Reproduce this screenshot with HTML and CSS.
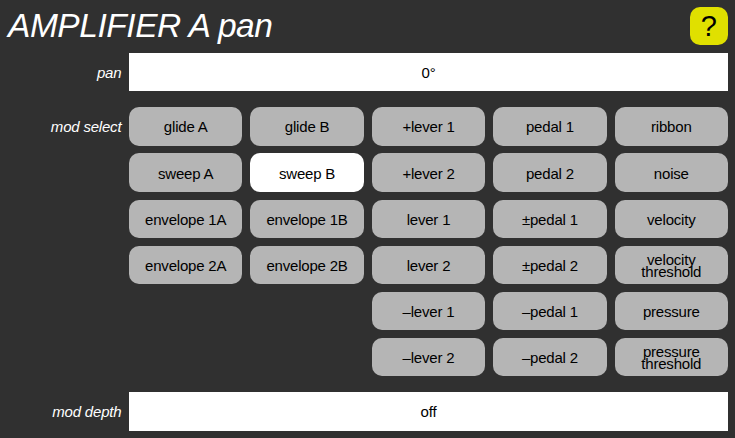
FILE: index.html
```html
<!DOCTYPE html>
<html lang="en">
<head>
<meta charset="utf-8">
<title>AMPLIFIER A pan</title>
<link rel="stylesheet" href="styles.css">
</head>
<body>
<header class="header">
  <h1 class="title">AMPLIFIER A pan</h1>
  <button class="help">?</button>
</header>
<main class="form">
  <div class="label">pan</div>
  <div class="field">0°</div>
  <div class="label">mod select</div>
  <div class="options">
    <button class="option">glide A</button>
    <button class="option">glide B</button>
    <button class="option">+lever 1</button>
    <button class="option">pedal 1</button>
    <button class="option">ribbon</button>
    <button class="option">sweep A</button>
    <button class="option selected">sweep B</button>
    <button class="option">+lever 2</button>
    <button class="option">pedal 2</button>
    <button class="option">noise</button>
    <button class="option">envelope 1A</button>
    <button class="option">envelope 1B</button>
    <button class="option">lever 1</button>
    <button class="option">±pedal 1</button>
    <button class="option">velocity</button>
    <button class="option">envelope 2A</button>
    <button class="option">envelope 2B</button>
    <button class="option">lever 2</button>
    <button class="option">±pedal 2</button>
    <button class="option">velocity<br>threshold</button>
    <button class="option third">–lever 1</button>
    <button class="option">–pedal 1</button>
    <button class="option">pressure</button>
    <button class="option third">–lever 2</button>
    <button class="option">–pedal 2</button>
    <button class="option">pressure<br>threshold</button>
  </div>
  <div class="label">mod depth</div>
  <div class="field">off</div>
</main>
</body>
</html>
```
FILE: styles.css
```css
* {
  box-sizing: border-box;
}

body {
  margin: 0;
  height: 438px;
  overflow: hidden;
  padding: 7px 7px 0 7px;
  background: #303030;
  color: #fff;
  font-family: "Liberation Sans", Arial, sans-serif;
  font-size: 15px;
  letter-spacing: -0.2px;
  line-height: 12.5px;
}

.header {
  display: flex;
  justify-content: space-between;
  height: 46px;
}

.title {
  margin: 0 0 0 1px;
  font-size: 33.5px;
  font-weight: normal;
  font-style: italic;
  letter-spacing: -0.45px;
  line-height: 38px;
}

.help {
  width: 38.4px;
  height: 38.4px;
  padding: 0;
  border: 0;
  border-radius: 10px;
  background: #e0e000;
  color: #000;
  font: 29px/38px "Liberation Sans", Arial, sans-serif;
}

.form {
  display: grid;
  grid-template-columns: 114.4px 599px;
  column-gap: 7.6px;
  row-gap: 15.9px;
}

.label {
  height: 38.4px;
  line-height: 40px;
  font-style: italic;
  text-align: right;
}

.field {
  height: 38.4px;
  background: #fff;
  color: #000;
  line-height: 40px;
  text-align: center;
}

.options {
  display: grid;
  grid-template-columns: repeat(5, 1fr);
  grid-template-rows: 38.4px 38.6px;
  grid-auto-rows: 38.3px;
  gap: 7.8px 8px;
}

.option {
  padding: 2px 0 0;
  border: 0;
  border-radius: 10px;
  background: #b5b5b5;
  color: #000;
  font: inherit;
  letter-spacing: inherit;
}

.selected {
  background: #fff;
}

.third {
  grid-column: 3;
}
```
